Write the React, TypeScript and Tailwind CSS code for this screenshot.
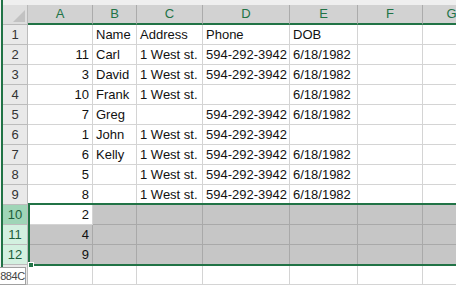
import React from "react";

const columns = ["A", "B", "C", "D", "E", "F", "G"];

const rows: string[][] = [
  ["", "Name", "Address", "Phone", "DOB"],
  ["11", "Carl", "1 West st.", "594-292-3942", "6/18/1982"],
  ["3", "David", "1 West st.", "594-292-3942", "6/18/1982"],
  ["10", "Frank", "1 West st.", "", "6/18/1982"],
  ["7", "Greg", "", "594-292-3942", "6/18/1982"],
  ["1", "John", "1 West st.", "594-292-3942", ""],
  ["6", "Kelly", "1 West st.", "594-292-3942", "6/18/1982"],
  ["5", "", "1 West st.", "594-292-3942", "6/18/1982"],
  ["8", "", "1 West st.", "594-292-3942", "6/18/1982"],
  ["2"],
  ["4"],
  ["9"],
  [],
];

const selectedRows = [10, 11, 12];

const App: React.FC = () => {
  return (
    <div
      className="relative flex h-[285px] w-[456px] overflow-hidden bg-white text-[13px] text-[#111]"
      style={{ fontFamily: '"Liberation Sans", Arial, sans-serif' }}
    >
      {/* window edge */}
      <div className="h-full w-[3px] shrink-0 border-l border-[#f4f4f4] bg-[#217346]" />

      <div className="relative flex-1">
        <div className="h-[5px] bg-[#efefef]" />

        <div className="grid grid-cols-[25px_65px_44px_66px_87px_68px_65px_58px]">
          {/* corner */}
          <div className="flex h-5 items-end justify-end border-r border-b border-[#b9b9b9] bg-[#dedede] pr-[2px] pb-[2px]">
            <svg width="12" height="12" viewBox="0 0 12 12">
              <polygon points="12,0 12,12 0,12" fill="#c2c2c2" />
            </svg>
          </div>
          {columns.map((c) => (
            <div
              key={c}
              className="flex h-5 items-center justify-center border-r border-b-2 border-r-[#ababab] border-b-[#217346] bg-[#d2d2d2] pb-[1px] text-[#217346]"
            >
              {c}
            </div>
          ))}

          {rows.map((row, i) => {
            const n = i + 1;
            const sel = selectedRows.includes(n);
            const active = n === 10;
            return (
              <React.Fragment key={n}>
                <div
                  className={
                    "flex h-5 items-center justify-center border-r border-b border-[#bcbcbc] pt-[1px] " +
                    (active
                      ? "bg-[#9fd5b7] text-[#1e5e3a]"
                      : sel
                      ? "bg-[#d3f0e0] text-[#1e5e3a]"
                      : "bg-[#e9e9e9] text-[#333]")
                  }
                >
                  {n < 13 ? n : ""}
                </div>
                {columns.map((c, j) => {
                  const value = row[j] ?? "";
                  const shaded = sel && !(active && j === 0);
                  return (
                    <div
                      key={c}
                      className={
                        "flex h-5 items-center whitespace-nowrap border-r border-b px-[3px] pt-[1px] " +
                        (j === 0 ? "justify-end " : "justify-start ") +
                        (shaded
                          ? "border-[#a9a9a9] bg-[#c6c6c6]"
                          : "border-[#d4d4d4] bg-white")
                      }
                    >
                      {value}
                    </div>
                  );
                })}
              </React.Fragment>
            );
          })}
        </div>

        {/* selection outline */}
        <div className="pointer-events-none absolute top-[203px] left-[25px] h-[63px] w-[460px] border-2 border-[#217346]" />
        {/* fill handle */}
        <div className="absolute top-[262px] left-[25px] h-[6px] w-[6px] border border-white bg-[#217346]" />
      </div>

      {/* name tooltip */}
      <div className="absolute top-[267px] left-0 flex h-[18px] w-[26px] items-center justify-center overflow-hidden border border-l-0 border-[#a0a0a0] bg-white text-[11px] tracking-[-0.4px] text-[#444]">
        884C
      </div>
    </div>
  );
};

export default App;
